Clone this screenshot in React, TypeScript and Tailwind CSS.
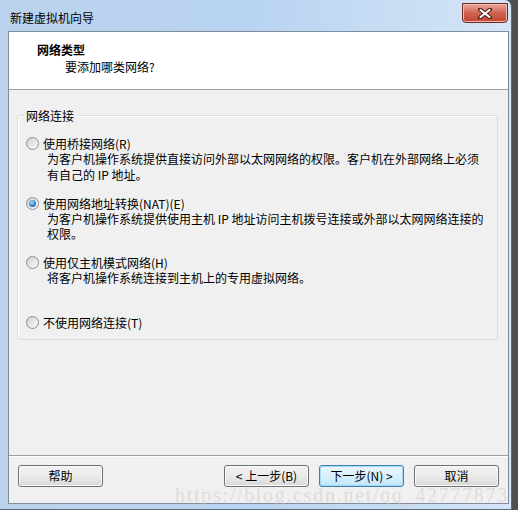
import React from "react";

const options = [
  {
    label: "使用桥接网络(R)",
    lines: [
      "为客户机操作系统提供直接访问外部以太网网络的权限。客户机在外部网络上必须",
      "有自己的 IP 地址。",
    ],
    checked: false,
  },
  {
    label: "使用网络地址转换(NAT)(E)",
    lines: [
      "为客户机操作系统提供使用主机 IP 地址访问主机拨号连接或外部以太网网络连接的",
      "权限。",
    ],
    checked: true,
  },
  {
    label: "使用仅主机模式网络(H)",
    lines: ["将客户机操作系统连接到主机上的专用虚拟网络。"],
    checked: false,
  },
  { label: "不使用网络连接(T)", lines: [], checked: false },
];

const Radio = ({ checked }: { checked: boolean }) => (
  <span className="flex h-[13px] w-[13px] shrink-0 items-center justify-center rounded-full border border-[#8c8e90] bg-linear-to-br from-[#d0d0d0] to-[#fdfdfd]">
    {checked ? (
      <span className="h-[7px] w-[7px] rounded-full bg-[radial-gradient(circle_at_40%_35%,#b4e0fb,#3b8ad0_50%,#14508e)]" />
    ) : (
      <span className="h-[9px] w-[9px] rounded-full bg-linear-to-br from-[#d6d6d6] to-[#f6f6f6]" />
    )}
  </span>
);

const Button = ({
  children,
  focused,
}: {
  children: React.ReactNode;
  focused?: boolean;
}) => (
  <div
    className={
      focused
        ? "flex h-[22px] w-[85px] items-center justify-center rounded-[3px] border border-[#3c7fb1] bg-linear-to-b from-[#eaf6fd] via-[#d9f0fc] to-[#bee6fd] shadow-[inset_0_0_0_1px_#a7d9f5]"
        : "flex h-[22px] w-[85px] items-center justify-center rounded-[3px] border border-[#707070] bg-linear-to-b from-[#f2f2f2] via-[#ebebeb] to-[#d8d8d8] shadow-[inset_0_0_0_1px_#fcfcfc]"
    }
  >
    {children}
  </div>
);

export default function App() {
  return (
    <div className="relative flex h-[510px] w-[518px] overflow-hidden bg-[#4d4f52] font-['Noto_Sans_CJK_SC',sans-serif] text-[12px] text-black">
      {/* window frame */}
      <div className="flex h-[510px] w-[512px] flex-col rounded-tr-[7px] border-r border-b border-[#5a6a7c] bg-linear-to-r from-[#bad2ec] via-[#b9d4f1] to-[#d4e5f7]">
        {/* title bar */}
        <div className="flex h-[31px] items-start">
          <span className="ml-[10px] mt-[9px] leading-[17px]">新建虚拟机向导</span>
          <div className="ml-auto mr-[3px] mt-[3px] flex h-[20px] w-[46px] items-center justify-center rounded-b-[4px] border border-[#6b2a22] bg-linear-to-b from-[#e9aba1] via-[#d0624f] to-[#c44331] shadow-[inset_0_0_0_1px_#f0b8ae]">
            <svg width="14" height="11" viewBox="0 0 14 11">
              <path d="M2 1.5 L12 9.5 M12 1.5 L2 9.5" stroke="#4a1f1a" strokeWidth="4" strokeLinecap="round" />
              <path d="M2.5 2 L11.5 9 M11.5 2 L2.5 9" stroke="#ffffff" strokeWidth="2.2" strokeLinecap="round" />
            </svg>
          </div>
        </div>

        {/* client area */}
        <div className="ml-[8px] flex h-[473px] w-[501px] flex-col border border-[#7f8d9c] bg-[#f0f0f0]">
          {/* header */}
          <div className="h-[58px] border-b border-[#a0a0a0] bg-white pt-[8.5px] leading-[17px]">
            <div className="pl-[28px] font-bold">网络类型</div>
            <div className="pl-[56px]">要添加哪类网络?</div>
          </div>

          {/* body */}
          <div className="flex flex-1 flex-col">
            <div className="relative ml-[8px] mt-[25px] h-[225px] w-[481px] rounded-[3px] border border-[#d5dfe5] shadow-[inset_1px_1px_0_#ffffff]">
              <span className="absolute left-[6px] top-[-9px] bg-[#f0f0f0] px-[2px] leading-[17px]">
                网络连接
              </span>
              <div className="flex flex-col pt-[20px]">
                {options.map((o) => (
                  <div key={o.label} className="flex h-[59.5px] flex-col">
                    <div className="flex h-[15px] items-center gap-[4px] pl-[8px] leading-[15px]">
                      <Radio checked={o.checked} />
                      <span className="whitespace-nowrap">{o.label}</span>
                    </div>
                    {o.lines.map((l) => (
                      <div key={l} className="whitespace-nowrap pl-[29px] leading-[15.5px]">
                        {l}
                      </div>
                    ))}
                  </div>
                ))}
              </div>
            </div>

            <div className="flex-1" />

            {/* footer */}
            <div className="border-t border-[#a0a0a0] shadow-[inset_0_1px_0_#ffffff]">
              <div className="flex items-center px-[9px] pb-[16px] pt-[9px]">
                <Button>帮助</Button>
                <div className="ml-auto flex gap-[10px]">
                  <Button>&lt; 上一步(B)</Button>
                  <Button focused>下一步(N) &gt;</Button>
                  <Button>取消</Button>
                </div>
              </div>
            </div>
          </div>
        </div>
      </div>

      {/* watermark over the bottom */}
      <span className="pointer-events-none absolute left-[175px] top-[480px] whitespace-nowrap font-['Liberation_Serif',serif] text-[20px] tracking-[1.7px] text-[#d2d2d2] opacity-60">
        https://blog.csdn.net/qq_42777873
      </span>
    </div>
  );
}
